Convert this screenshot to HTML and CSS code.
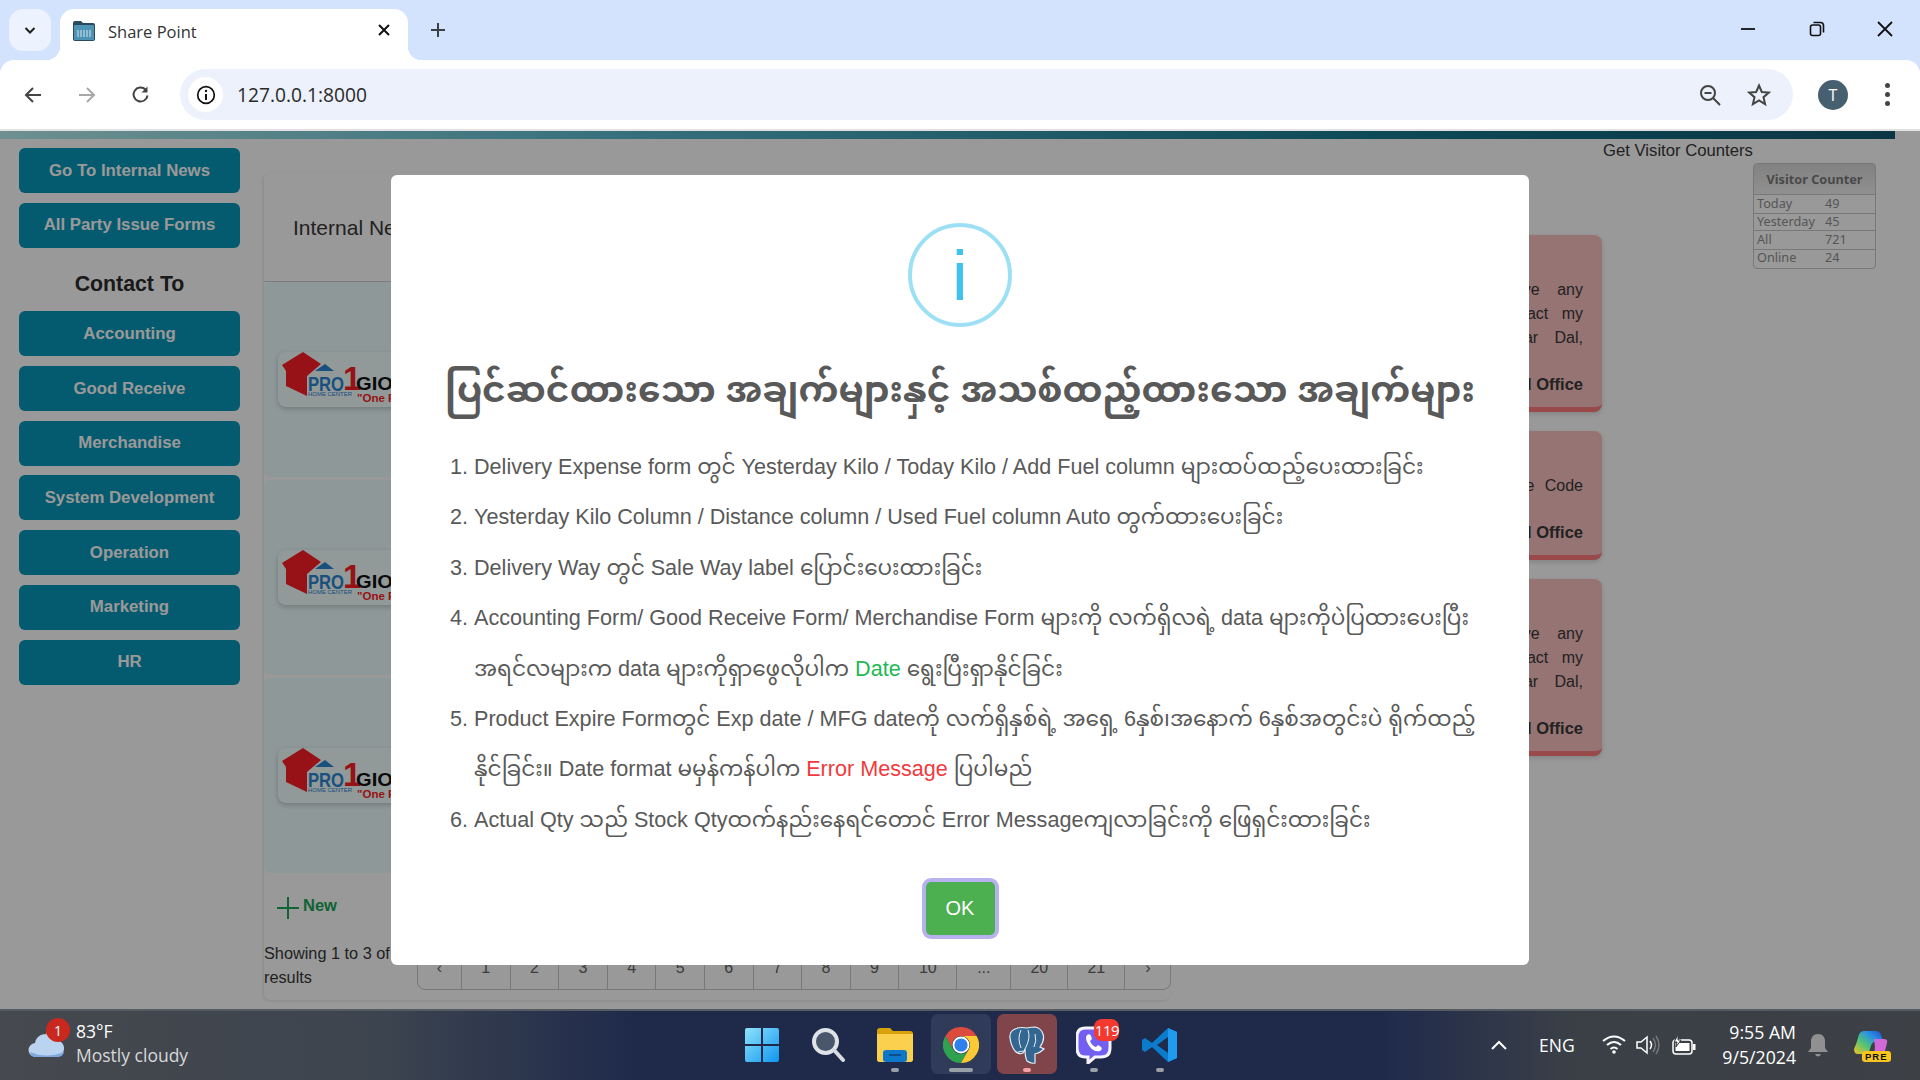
FILE: index.html
```html
<!DOCTYPE html>
<html lang="en">
<head>
<meta charset="utf-8">
<title>Share Point</title>
<link rel="stylesheet" href="styles.css">
</head>
<body>
<div class="tabstrip">
  <div class="tablist"><svg width="16" height="16" viewBox="0 0 16 16"><path d="M3.500 6l4.500 4.500L12.500 6" fill="none" stroke="#1f1f1f" stroke-width="2"/></svg></div>
  <div class="tab">
    <svg class="favicon" width="24" height="24" viewBox="0 0 24 24"><path d="M1 5q0-2 2-2h6l2 2h10q2 0 2 2v14q0 2-2 2H3q-2 0-2-2z" fill="#2b4a5e"/><rect x="2" y="7" width="20" height="15" rx="1" fill="#4f93b4"/><path d="M6 12v7M9 12v7M12 12v7M15 12v7M18 12v7" stroke="#b5d5e2" stroke-width="1.300"/></svg>
    <span class="tabtitle">Share Point</span>
    <svg class="tabclose" width="14" height="14" viewBox="0 0 14 14"><path d="M2 2l10 10M12 2L2 12" stroke="#111" stroke-width="2"/></svg>
  </div>
  <svg class="newtab" width="18" height="18" viewBox="0 0 18 18"><path d="M9 2v14M2 9h14" stroke="#3c4043" stroke-width="2"/></svg>
  <div class="winctl">
    <svg width="16" height="16" viewBox="0 0 16 16"><path d="M1 8h14" stroke="#111" stroke-width="1.800"/></svg>
    <svg width="16" height="16" viewBox="0 0 16 16"><rect x="1.500" y="4" width="10" height="10.500" rx="2" fill="none" stroke="#111" stroke-width="1.600"/><path d="M4.500 1.500h7q3 0 3 3v7" fill="none" stroke="#111" stroke-width="1.600"/></svg>
    <svg width="16" height="16" viewBox="0 0 16 16"><path d="M1 1l14 14M15 1L1 15" stroke="#111" stroke-width="1.800"/></svg>
  </div>
</div>
<div class="toolbar">
  <svg class="nav" width="20" height="20" viewBox="0 0 20 20"><path d="M18 10H3M10 3l-7 7 7 7" fill="none" stroke="#444" stroke-width="2"/></svg>
  <svg class="nav" width="20" height="20" viewBox="0 0 20 20"><path d="M2 10h15M10 3l7 7-7 7" fill="none" stroke="#a8a8a8" stroke-width="2"/></svg>
  <svg class="nav" width="20" height="20" viewBox="0 0 20 20"><path d="M16.500 10.500a7 7 0 1 1-2-6" fill="none" stroke="#444" stroke-width="2"/><path d="M16.500 1.500v6h-6" fill="#444"/></svg>
  <div class="omnibox">
    <div class="infochip"><svg width="20" height="20" viewBox="0 0 20 20"><circle cx="10" cy="10" r="8.300" fill="none" stroke="#111" stroke-width="1.700"/><path d="M10 9v6" stroke="#111" stroke-width="2"/><circle cx="10" cy="6" r="1.200" fill="#111"/></svg></div>
    <span class="url">127.0.0.1:8000</span>
    <svg class="zoomout" width="22" height="22" viewBox="0 0 22 22"><circle cx="9" cy="9" r="7" fill="none" stroke="#444" stroke-width="2"/><path d="M14 14l7 7M5.500 9h7" stroke="#444" stroke-width="2"/></svg>
    <svg class="star" width="24" height="24" viewBox="0 0 24 24"><path d="M12 2.500l2.800 6.500 7 .6-5.300 4.600 1.600 6.900-6.100-3.700-6.100 3.700 1.600-6.900-5.300-4.600 7-.6z" fill="none" stroke="#444" stroke-width="2"/></svg>
  </div>
  <div class="avatar">T</div>
  <div class="kebab"><i></i><i></i><i></i></div>
</div>
<main class="page">
  <div class="topbar"></div>
  <div class="content">
    <aside class="sidebar">
      <a class="sbtn">Go To Internal News</a>
      <a class="sbtn">All Party Issue Forms</a>
      <h3 class="contact">Contact To</h3>
      <a class="sbtn">Accounting</a>
      <a class="sbtn">Good Receive</a>
      <a class="sbtn">Merchandise</a>
      <a class="sbtn">System Development</a>
      <a class="sbtn">Operation</a>
      <a class="sbtn">Marketing</a>
      <a class="sbtn">HR</a>
    </aside>
    <section class="panel">
      <div class="panelhead">Internal News</div>
      <div class="newsrow"><div class="logocard"><svg class="logo" width="112" height="52" viewBox="0 0 112 52"><use href="#pro1"/></svg></div></div>
      <div class="newsrow"><div class="logocard"><svg class="logo" width="112" height="52" viewBox="0 0 112 52"><use href="#pro1"/></svg></div></div>
      <div class="newsrow"><div class="logocard"><svg class="logo" width="112" height="52" viewBox="0 0 112 52"><use href="#pro1"/></svg></div></div>
      <div class="newlink"><svg width="22" height="22" viewBox="0 0 22 22"><path d="M11 0v22M0 11h22" stroke="#19a558" stroke-width="2"/></svg><b>New</b></div>
      <div class="panelfoot">
        <p class="showing">Showing 1 to 3 of 63 results</p>
        <div class="pager"><span class="p1">‹</span><span>1</span><span>2</span><span>3</span><span>4</span><span>5</span><span>6</span><span>7</span><span>8</span><span>9</span><span class="p2">10</span><span class="p3">...</span><span class="p4">20</span><span class="p4">21</span><span class="p5">›</span></div>
      </div>
    </section>
    <section class="notices">
      <article class="notice n1">
        <p class="w1">If you have any</p><p class="w2">questions, contact my</p><p class="w3">Daw Thandar Dal,</p>
        <p class="from">Head Office</p>
      </article>
      <article class="notice n2">
        <p class="w4">Please use the Code</p>
        <p class="from">Head Office</p>
      </article>
      <article class="notice n3">
        <p class="w1">If you have any</p><p class="w2">questions, contact my</p><p class="w3">Daw Thandar Dal,</p>
        <p class="from">Head Office</p>
      </article>
    </section>
    <section class="visitors">
      <div class="gvc">Get Visitor Counters</div>
      <div class="widget">
        <div class="wh">Visitor Counter</div>
        <div class="wr"><span>Today</span><span>49</span></div>
        <div class="wr"><span>Yesterday</span><span>45</span></div>
        <div class="wr"><span>All</span><span>721</span></div>
        <div class="wr"><span>Online</span><span>24</span></div>
      </div>
    </section>
  </div>
  <div class="overlay"></div>
  <div class="modal">
    <div class="infoicon">i</div>
    <h2 class="mtitle">ပြင်ဆင်ထားသော အချက်များနှင့် အသစ်ထည့်ထားသော အချက်များ</h2>
    <ol class="mlist">
      <li>Delivery Expense form တွင် Yesterday Kilo / Today Kilo / Add Fuel column များထပ်ထည့်ပေးထားခြင်း</li>
      <li>Yesterday Kilo Column / Distance column / Used Fuel column Auto တွက်ထားပေးခြင်း</li>
      <li>Delivery Way တွင် Sale Way label ပြောင်းပေးထားခြင်း</li>
      <li>Accounting Form/ Good Receive Form/ Merchandise Form များကို လက်ရှိလရဲ့ data များကိုပဲပြထားပေးပြီး<br>အရင်လများက data များကိုရှာဖွေလိုပါက <span class="green">Date</span> ရွေးပြီးရှာနိုင်ခြင်း</li>
      <li>Product Expire Formတွင် Exp date / MFG dateကို လက်ရှိနှစ်ရဲ့ အရှေ့ 6နှစ်၊အနောက် 6နှစ်အတွင်းပဲ ရိုက်ထည့်<br>နိုင်ခြင်း။ Date format မမှန်ကန်ပါက <span class="red">Error Message</span> ပြပါမည်</li>
      <li>Actual Qty သည် Stock Qtyထက်နည်းနေရင်တောင် Error Messageကျလာခြင်းကို ဖြေရှင်းထားခြင်း</li>
    </ol>
    <button class="okbtn">OK</button>
  </div>
</main>
<footer class="taskbar">
  <div class="weather">
    <svg class="cloud" width="38" height="30" viewBox="0 0 38 30"><circle cx="24" cy="8" r="7" fill="#e8901c"/><path d="M8 28a7 7 0 0 1-1-14 10 10 0 0 1 19-3 8.500 8.500 0 0 1 3 17z" fill="#b9d3f0"/><path d="M2 23q16 7 34 0q-1 5-7 5H8q-5 0-6-5z" fill="#7fa8dc"/></svg>
    <span class="wbadge">1</span>
    <div class="wtext"><span>83°F</span><span class="wsub">Mostly cloudy</span></div>
  </div>
  <div class="apps">
    <div class="app"><svg width="36" height="36" viewBox="0 0 36 36"><defs><linearGradient id="win" x1="0" y1="0" x2="1" y2="1"><stop offset="0" stop-color="#8fe3fb"/><stop offset="1" stop-color="#0f96f0"/></linearGradient></defs><path d="M1 3q0-2 2-2h14v16H1zM19 1h14q2 0 2 2v14H19zM1 19h16v16H3q-2 0-2-2zM19 19h16v14q0 2-2 2H19z" fill="url(#win)"/></svg></div>
    <div class="app"><svg width="34" height="36" viewBox="0 0 34 36"><circle cx="14.500" cy="14.500" r="11.500" fill="#49566c" stroke="#dfe3e8" stroke-width="4"/><path d="M23 23l9 10" stroke="#d8dce0" stroke-width="4" stroke-linecap="round"/></svg></div>
    <div class="app dot"><svg width="36" height="34" viewBox="0 0 36 34"><path d="M0 3q0-3 3-3h10l3 3h17q3 0 3 3v25q0 3-3 3H3q-3 0-3-3z" fill="#d9a20a"/><path d="M0 6h36v25q0 3-3 3H3q-3 0-3-3z" fill="#fcd04f"/><rect x="6" y="22" width="24" height="12" rx="3" fill="#0d78c9"/><path d="M12 27h12" stroke="#0a4f8a" stroke-width="2"/></svg></div>
    <div class="app box dot wide"><svg width="36" height="36" viewBox="0 0 36 36"><path d="M33.600 9A18 18 0 0 0 2.400 9L10.200 22.500A9 9 0 0 1 18 9z" fill="#dd4b3e"/><path d="M2.400 9A18 18 0 0 0 18 36L25.800 22.500A9 9 0 0 1 10.200 22.500z" fill="#2fa24f"/><path d="M18 36A18 18 0 0 0 33.600 9H18A9 9 0 0 1 25.800 22.500z" fill="#fcc934"/><circle cx="18" cy="18" r="8.500" fill="#fff"/><circle cx="18" cy="18" r="6.600" fill="#2f80ed"/></svg></div>
    <div class="app box pg dot pink"><svg width="36" height="38" viewBox="0 0 36 38"><path d="M9 2Q0 4 1 12q1 8 5 13 4 4 8 2l2-4q0 8 2 12 4 3 8 2v-9q5-1 9-5l-4-2q5-7 3-13-2-6-8-7-4 0-8 1-5-1-10 0z" fill="#336791" stroke="#e8eef5" stroke-width="1.200"/><path d="M12 4q-4 8 0 18M16 23q6-11 3-19M26 8q2 7-1 13M14 25l-5 1" stroke="#e8eef5" stroke-width="1" fill="none"/></svg></div>
    <div class="app dot"><svg width="36" height="38" viewBox="0 0 36 38"><path d="M9 2h16q9 0 9 9v11q0 9-9 9h-6l-7 6v-6h-3q-8 0-8-9V11q0-9 8-9z" fill="#7360f2" stroke="#f6f4ff" stroke-width="3"/><path d="M11 9q3-2 4 1l1 3-2 2q2 5 6 6l2-2 3 2q2 2-1 4-8 2-13-9-2-5 0-7z" fill="#fff"/></svg><span class="vbadge">119</span></div>
    <div class="app dot"><svg width="36" height="36" viewBox="0 0 36 36"><path d="M26 1l9 4v26l-9 4L10 20 3 25 0 23v-10l3-2 7 5z" fill="#0a7ccb"/><path d="M26 1l9 4v26l-9 4z" fill="#1f9cf0"/><path d="M26 10L15 18l11 8z" fill="#1f2b4b"/></svg></div>
  </div>
  <div class="tray">
    <svg class="chev" width="16" height="10" viewBox="0 0 16 10"><path d="M1 9l7-7 7 7" fill="none" stroke="#fff" stroke-width="2"/></svg>
    <span class="eng">ENG</span>
    <svg class="wifi" width="24" height="20" viewBox="0 0 24 20"><path d="M1 6q11-9 22 0M5 10q7-6 14 0M8.500 14q3.500-3 7 0" fill="none" stroke="#fff" stroke-width="2"/><circle cx="12" cy="17" r="1.800" fill="#fff"/></svg>
    <svg class="vol" width="24" height="22" viewBox="0 0 24 22"><path d="M1 8h4l6-5v16l-6-5H1z" fill="none" stroke="#fff" stroke-width="1.500"/><path d="M14 7q3 4 0 8" fill="none" stroke="#fff" stroke-width="1.500"/><path d="M17 4q5 7 0 14M20 2q6 9 0 18" fill="none" stroke="#777" stroke-width="1.500"/></svg>
    <svg class="batt" width="24" height="20" viewBox="0 0 24 20"><rect x="1" y="5" width="19" height="14" rx="3" fill="none" stroke="#fff" stroke-width="1.500"/><rect x="3.500" y="8" width="14" height="8" fill="#fff"/><rect x="21" y="9" width="2.500" height="6" fill="#fff"/><path d="M6 0L2 7h3l-1 5 5-7H6z" fill="#fff" stroke="#3c4046"/></svg>
    <div class="clock"><span>9:55 AM</span><span>9/5/2024</span></div>
    <svg class="bell" width="20" height="24" viewBox="0 0 20 24"><path d="M10 1q7 0 7 8v6l3 4H0l3-4V9q0-8 7-8zM7 21h6q-1 2.500-3 2.500T7 21z" fill="#909090"/></svg>
    <div class="copilot"><svg width="34" height="28" viewBox="0 0 34 28"><defs><linearGradient id="cp" x1="0" y1="1" x2="1" y2="0"><stop offset="0" stop-color="#f7c51e"/><stop offset=".4" stop-color="#4fc27a"/><stop offset=".7" stop-color="#2a8fe6"/><stop offset="1" stop-color="#1d4fc4"/></linearGradient></defs><path d="M10 0h12q4 0 5 4l2 6q-12-2-13 8-1 5-6 5H4q-4 0-4-5 2-4 4-11Q5 0 10 0z" fill="url(#cp)"/><path d="M20 8h10q4 0 3 4l-2 8q-1 4-5 4h-9q4-2 4-8z" fill="#d06ad8"/></svg><span class="pre">PRE</span></div>
  </div>
</footer>
<svg class="defs" width="0" height="0"><defs><g id="pro1"><path d="M0 11L21-2l18 12-14 12v20L4 32V17z" fill="#fc1e25"/><path d="M33 17l10-7 9 7z" fill="#2a85d0"/><text x="26" y="37" class="lpro" textLength="36" lengthAdjust="spacingAndGlyphs">PRO</text><text x="61" y="36" class="lone">1</text><text x="26" y="42" class="lhome" textLength="44" lengthAdjust="spacingAndGlyphs">HOME CENTER</text><text x="74" y="36" class="lgio" textLength="37" lengthAdjust="spacingAndGlyphs">GIO</text><text x="75" y="48" class="lone2">"One P</text></g></defs></svg>
</body>
</html>
```
FILE: styles.css
```css
*{box-sizing:border-box}
html,body{margin:0;padding:0;width:1920px;height:1080px;overflow:hidden}
body{background:#d3e3fd;font-family:"Liberation Sans",Arial,sans-serif;display:flex;flex-direction:column}
svg{display:block;flex:none}
.defs{position:absolute}
.tabstrip{height:60px;background:#d3e3fd;display:flex;align-items:flex-start;position:relative;flex:none}
.tablist{width:42px;height:42px;margin:9px 0 0 9px;border-radius:14px;background:#ecf2fe;display:flex;align-items:center;justify-content:center}
.tab{width:348px;height:51px;margin:9px 0 0 9px;background:#fff;border-radius:14px 14px 0 0;display:flex;align-items:center;padding:0 17px 9px 12px;font-family:"Open Sans",sans-serif;position:relative}
.tab::before,.tab::after{content:"";position:absolute;bottom:0;width:14px;height:14px}
.tab::before{left:-14px;background:radial-gradient(circle at 0 0,transparent 14px,#fff 14.500px)}
.tab::after{right:-14px;background:radial-gradient(circle at 100% 0,transparent 14px,#fff 14.500px)}
.favicon{margin-right:12px}
.tabtitle{flex:1;font-size:16.500px;color:#333;padding-top:3px}
.newtab{margin:21px 0 0 21px}
.winctl{margin-left:auto;display:flex;width:153px;justify-content:space-between;margin-right:27px;margin-top:21px}
.toolbar{height:71px;background:#fff;border-bottom:2px solid #e1e1e1;display:flex;align-items:center;padding:0 0 0 23px;flex:none;border-radius:14px 14px 0 0}
.nav{margin-right:34px}
.omnibox{width:1613px;height:51px;margin-left:-5px;background:#ecf1fb;border-radius:26px;display:flex;align-items:center;padding:0 8px}
.infochip{width:35px;height:35px;border-radius:50%;background:#fff;display:flex;align-items:center;justify-content:center}
.url{margin-left:14px;font:19.200px "Open Sans",sans-serif;color:#2a2a2a;flex:1}
.zoomout{margin-right:26px}
.star{margin-right:14px}
.avatar{width:30px;height:30px;border-radius:50%;background:#466070;color:#fff;font:16px "Open Sans",sans-serif;display:flex;align-items:center;justify-content:center;margin-left:25px}
.kebab{display:flex;flex-direction:column;gap:4px;margin-left:37px}
.kebab i{width:5px;height:5px;border-radius:50%;background:#444}
.page{height:878px;position:relative;overflow:hidden;flex:none;background:#fff}
.topbar{width:1895px;height:8px;background:linear-gradient(90deg,#b7f0f0 0,#5abbcf 33%,#167b91 73%,#145a71 100%)}
.content{display:flex;height:870px;color:#383838}
.sidebar{width:264px;padding:9px 24px 0 19px;flex:none;display:flex;flex-direction:column}
.sbtn{height:45px;border-radius:6px;background:#0896b7;color:#fff;font-weight:700;font-size:16.800px;display:flex;align-items:center;justify-content:center;margin-bottom:9.700px}
.contact{height:54px;margin:0;padding-top:1px;font-size:21.300px;font-weight:700;display:flex;align-items:center;justify-content:center;color:#2c2c2c}
.panel{width:906px;margin-top:34px;height:827px;border-radius:6px;box-shadow:-1px 1px 3px rgba(0,0,0,.1);display:flex;flex-direction:column;flex:none;position:relative}
.panelhead{height:109px;padding:43px 0 0 29px;font-size:21px;display:flex;align-items:flex-start;border-bottom:1px solid #d0d0d0;flex:none}
.newsrow{height:195px;margin-bottom:3px;background:#edfdfd;border-radius:6px;padding-left:14px;display:flex;align-items:center;flex:none}
.logocard{width:400px;height:55px;background:#f3ffff;border-radius:8px;box-shadow:0 2px 5px rgba(0,0,0,.2);padding:0 0 0 4px;display:flex;align-items:center}
.logo{overflow:visible}
.lpro{font:700 20px "Liberation Sans",sans-serif;fill:#2a85d0}
.lone{font:700 33px "Liberation Sans",sans-serif;fill:#fc1e25}
.lhome{font:6px "Liberation Sans",sans-serif;fill:#2a85d0}
.lgio{font:700 19px "Liberation Sans",sans-serif;fill:#111}
.lone2{font:700 11.500px "Liberation Sans",sans-serif;fill:#fc1e25}
.newlink{display:flex;align-items:flex-start;margin:21px 0 0 13px;color:#19a558;font-size:16.500px;height:22px}
.newlink b{margin-left:4px;margin-top:-1px}
.panelfoot{display:flex;margin-top:14px;position:relative}
.showing{margin:7.500px 0 0;width:155px;font-size:16.300px;line-height:24px;flex:none}
.pager{display:flex;height:44px;margin:13px 0 0 -2px;border:1px solid #c8c8c8;border-radius:0 0 8px 8px;color:#666;font-size:16px}
.pager span{width:48.600px;display:flex;align-items:center;justify-content:center;border-right:1px solid #c8c8c8}
.pager .p1{width:44px}
.pager .p2{width:58px}
.pager .p3{width:54px}
.pager .p4{width:57px}
.pager .p5{width:45px;border-right:0}
.notices{margin:96px 0 0 20px;width:412px;flex:none;display:flex;flex-direction:column}
.notice{border-radius:8px;background:#fac1c1;border-bottom:5px solid #ff7b7b;box-shadow:0 2px 5px rgba(0,0,0,.15);padding:0 19px;display:flex;flex-direction:column}
.notice p{margin:0;font-size:16px;line-height:24px;text-align:right}
.n1{height:177px;padding-top:43px;margin-bottom:19px}
.n2{height:129px;padding-top:43px;margin-bottom:19px}
.n3{height:177px;padding-top:43px}
.w1{word-spacing:13px}
.w2{word-spacing:9px}
.w3{word-spacing:12px}
.w4{word-spacing:6px}
.notice .from{font-weight:700;font-size:16.500px;margin-top:auto;margin-bottom:11px}
.visitors{flex:1;position:relative;padding:0 0 0 1px}
.gvc{font-size:16.700px;height:24px;line-height:24px;white-space:nowrap}
.widget{margin:0 0 0 150px;width:123px;height:106px;border:1px solid #c8c8c8;border-radius:4px;color:#909090;font:12.700px "Noto Sans",sans-serif;overflow:hidden}
.wh{height:31px;background:linear-gradient(#d8d8d8,#f0f0f0);font-weight:700;display:flex;align-items:center;justify-content:center;border-bottom:1px solid #c8c8c8;color:#7a7a7a}
.wr{height:18.500px;display:flex;border-bottom:1px solid #c8c8c8;align-items:center;padding-left:3px;line-height:1}
.wr:nth-child(3){height:17.500px}
.wr span:first-child{width:68px}
.wr:last-child{border-bottom:0;padding-bottom:3px}
.overlay{position:absolute;inset:0;background:rgba(0,0,0,.4)}
.modal{position:absolute;left:391px;top:44px;width:1138px;height:790px;background:#fff;border-radius:6px;display:flex;flex-direction:column;align-items:center;color:#595959;padding-top:48px;font-family:"Liberation Sans","Noto Sans Myanmar","Noto Serif Myanmar","Padauk","Myanmar Text",sans-serif}
.infoicon{width:104px;height:104px;border:4px solid #9de0f6;border-radius:50%;color:#3fc3ee;font:71px "Liberation Sans",sans-serif;display:flex;align-items:center;justify-content:center;line-height:1;flex:none}
.mtitle{margin:33px 0 0;font-size:36px;font-weight:700;line-height:60px;white-space:nowrap}
.mlist{margin:22px 0 0;padding:0 0 0 83px;width:100%;font-size:21.600px;line-height:50.400px;white-space:nowrap}
.green{color:#1db954}
.red{color:#f03a3e}
.okbtn{width:69px;height:53px;margin-top:auto;margin-bottom:30px;border:0;border-radius:5px;background:#4caf50;color:#fff;font:20px "Liberation Sans",sans-serif;box-shadow:0 0 0 4px rgba(112,102,224,.5)}
.taskbar{height:71px;flex:none;border-top:2px solid #555b63;background:linear-gradient(90deg,#46494e 0,#3c444f 20%,#1f2a4b 33%,#1f2a4b 72%,#3b4047 82%,#3d4045 100%);display:flex;position:relative;color:#fff;font-family:"Open Sans",sans-serif;padding-bottom:2px}
.weather{width:729px;position:relative;display:flex;padding:0 0 0 76px;flex:none}
.cloud{position:absolute;left:28px;top:18px}
.wbadge{position:absolute;left:46px;top:7px;width:24px;height:24px;border-radius:50%;background:#c8281e;font-size:14px;display:flex;align-items:center;justify-content:center}
.wtext{display:flex;flex-direction:column;font-size:17.500px;line-height:24px;padding-top:8px}
.wsub{color:#d8d8d8}
.apps{display:flex;width:464px;flex:none}
.app{width:66.300px;position:relative;display:flex;align-items:center;justify-content:center;flex:none}
.box::before{content:"";position:absolute;left:3px;right:3px;top:3px;height:60px;border-radius:7px;background:rgba(255,255,255,.08)}
.app>svg{position:relative}
.pg::before{background:#7f454a}
.dot::after{content:"";position:absolute;bottom:6px;left:50%;width:8px;height:4px;margin-left:-4px;border-radius:2px;background:#9aa0a8}
.wide::after{width:24px;margin-left:-12px}
.pink::after{background:#f4a0a8}
.vbadge{position:absolute;left:34px;top:8px;width:25px;height:22px;background:#f4392e;border-radius:8px;font-size:15px;display:flex;align-items:center;justify-content:center;letter-spacing:-.5px;color:#fff}
.tray{flex:1;display:flex;align-items:center;position:relative}
.chev{margin-left:298px}
.eng{margin-left:32px;font-size:17.500px;width:40px}
.wifi{margin-left:23px}
.vol{margin-left:10px}
.batt{margin-left:12px}
.clock{margin-left:5px;width:95px;display:flex;flex-direction:column;align-items:flex-end;font-size:17.700px;line-height:25px}
.bell{margin-left:12px}
.copilot{margin-left:26px;position:relative}
.pre{position:absolute;left:8px;top:20px;background:#f7c51e;color:#111;border-radius:3px;font:700 9.500px "Liberation Sans",sans-serif;padding:0 3px;letter-spacing:1px;line-height:11px}
```
